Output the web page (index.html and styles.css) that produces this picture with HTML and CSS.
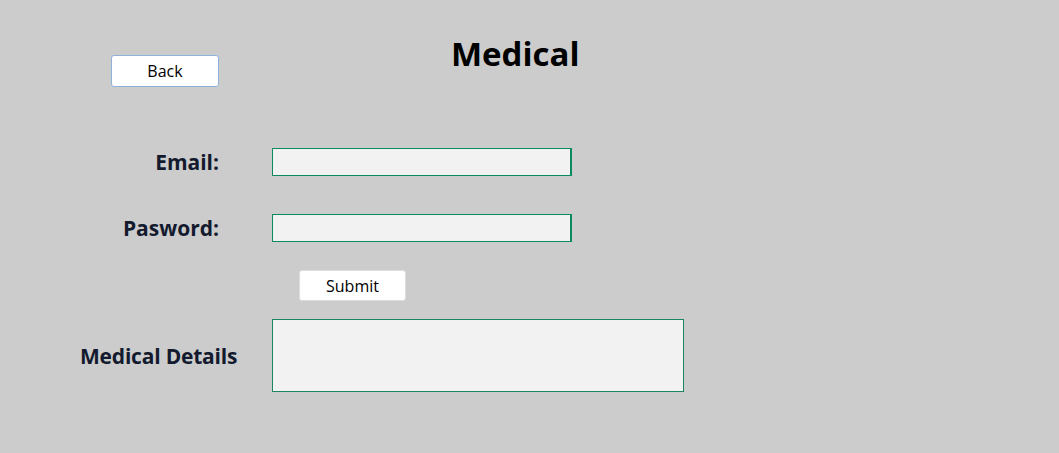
FILE: index.html
```html
<!DOCTYPE html>
<html>
<head>
<meta charset="utf-8">
<link rel="stylesheet" href="styles.css">
</head>
<body>
<div class="page">
  <div class="top">
    <button class="btn back">Back</button>
    <h1 class="title">Medical</h1>
  </div>
  <div class="row row-email">
    <label class="label">Email:</label>
    <input class="field" type="text">
  </div>
  <div class="row row-pass">
    <label class="label">Pasword:</label>
    <input class="field" type="password">
  </div>
  <div class="row row-submit">
    <button class="btn submit">Submit</button>
  </div>
  <div class="row row-details">
    <label class="label label-wide">Medical Details</label>
    <textarea class="details"></textarea>
  </div>
</div>
</body>
</html>
```
FILE: styles.css
```css
html, body {
  margin: 0;
  padding: 0;
  background: #cccccc;
  font-family: "Open Sans", "Noto Sans", sans-serif;
}
.page {
  width: 1059px;
  height: 453px;
}
.top {
  display: flex;
  align-items: flex-start;
  padding-top: 34px;
  height: 113px;
  box-sizing: border-box;
}
.btn {
  background: #ffffff;
  font-family: inherit;
  font-size: 16px;
  color: #000;
  border-radius: 3px;
  padding: 0;
  cursor: pointer;
}
.back {
  margin-left: 111px;
  margin-top: 21px;
  width: 108px;
  height: 32px;
  border: 1px solid #8db2dc;
}
.title {
  margin: 0 0 0 232px;
  font-size: 33px;
  font-weight: 700;
  line-height: 40px;
  color: #000;
}
.row {
  display: flex;
  align-items: center;
}
.label {
  width: 219px;
  text-align: right;
  font-weight: 700;
  font-size: 21px;
  color: #131a2e;
  margin-right: 53px;
}
.field {
  width: 300px;
  height: 28px;
  box-sizing: border-box;
  margin: 0;
  background: #f2f2f2;
  border: 1px solid #0a8a60;
  border-right-width: 2px;
  padding: 0 4px;
}
.row-email { margin-top: 35px; }
.row-pass { margin-top: 38px; }
.row-submit { margin-top: 28px; }
.submit {
  margin-left: 299px;
  width: 107px;
  height: 31px;
  border: 1px solid #dddddd;
}
.row-details { margin-top: 18px; }
.label-wide {
  width: 192px;
  margin-left: 80px;
  margin-right: 0;
  text-align: left;
  white-space: nowrap;
  letter-spacing: -0.2px;
}
.details {
  width: 412px;
  height: 73px;
  box-sizing: border-box;
  margin: 0;
  background: #f2f2f2;
  border: 1px solid #1a8562;
  resize: none;
}
```
